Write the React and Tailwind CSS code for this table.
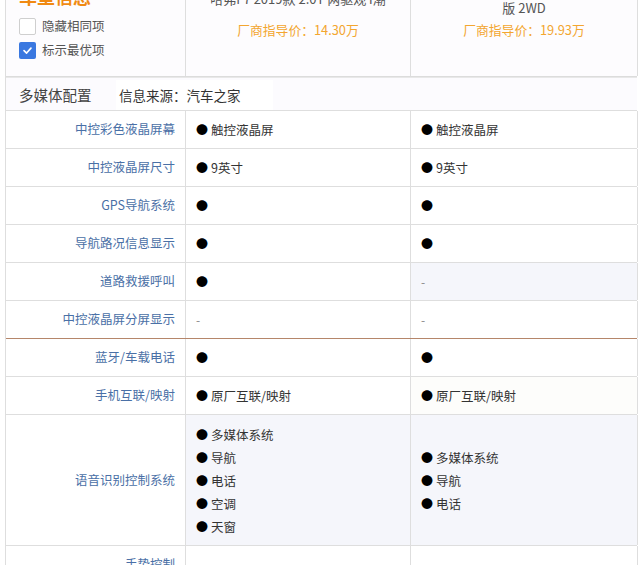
import React from "react";

const rows = [
  { label: "中控彩色液晶屏幕", a: ["触控液晶屏"], b: ["触控液晶屏"] },
  { label: "中控液晶屏尺寸", a: ["9英寸"], b: ["9英寸"] },
  { label: "GPS导航系统", a: [""], b: [""] },
  { label: "导航路况信息显示", a: [""], b: [""] },
  { label: "道路救援呼叫", a: [""], b: null, bBg: "bg-[#f5f6fb]" },
  { label: "中控液晶屏分屏显示", a: null, b: null, brown: true },
  { label: "蓝牙/车载电话", a: [""], b: [""] },
  { label: "手机互联/映射", a: ["原厂互联/映射"], b: ["原厂互联/映射"], bBg: "bg-[#fdfdfb]" },
  {
    label: "语音识别控制系统",
    a: ["多媒体系统", "导航", "电话", "空调", "天窗"],
    b: ["多媒体系统", "导航", "电话"],
    aBg: "bg-[#f5f6fb]",
    bBg: "bg-[#f5f6fb]",
    tall: true,
  },
  { label: "手势控制", a: null, b: null },
];

const Cell = ({ items, bg = "bg-white" }) => (
  <div className={`${bg} border-r border-[#dedede] pl-[10px] flex flex-col justify-center overflow-hidden`}>
    {items === null ? (
      <span className="text-[#888] text-[12px] leading-[23px]">-</span>
    ) : (
      items.map((t, i) => (
        <div key={i} className="flex items-center gap-[3px] text-[12.5px] leading-[23px] text-[#333]">
          <span className="text-black text-[12px]">●</span>
          {t && <span>{t}</span>}
        </div>
      ))
    )}
  </div>
);

const CheckBox = ({ checked, label }) => (
  <div className="flex items-center gap-[6px] h-[24px]">
    {checked ? (
      <span className="w-[17px] h-[17px] rounded-[2px] bg-[#3a78e0] flex items-center justify-center">
        <svg width="11" height="11" viewBox="0 0 12 12" fill="none">
          <path d="M2.2 6.2 L5 8.8 L9.8 3.4" stroke="white" strokeWidth="1.8" strokeLinecap="round" strokeLinejoin="round" />
        </svg>
      </span>
    ) : (
      <span className="w-[17px] h-[17px] rounded-[2px] border border-[#cfcfcf] bg-white" />
    )}
    <span className="text-[12.5px] text-[#555]">{label}</span>
  </div>
);

export default function App() {
  return (
    <div
      className="w-[640px] h-[565px] overflow-hidden bg-white"
      style={{ fontFamily: '"Noto Sans CJK SC", "Noto Sans", sans-serif' }}
    >
      <div className="ml-[5px] w-[632px] -mt-[24px] border-l border-[#dedede]">
        {/* header */}
        <div className="grid grid-cols-[180px_225px_227px] h-[101px] bg-[#fdfcfe] border-b border-[#dcdcdc]">
          <div className="border-r border-[#dedede] pl-[13px] pt-[8px]">
            <div className="text-[18px] leading-[24px] font-bold text-[#f08a12]">车型信息</div>
            <div className="mt-[6px]">
              <CheckBox label="隐藏相同项" />
              <CheckBox checked label="标示最优项" />
            </div>
          </div>
          <div className="border-r border-[#dedede] flex flex-col items-center pt-[13px]">
            <div className="text-[13px] leading-[20px] text-[#555] whitespace-nowrap">哈弗F7 2019款 2.0T 两驱观 i潮</div>
            <div className="mt-[11px] text-[12.8px] leading-[20px] text-[#f3a630]">厂商指导价：14.30万</div>
          </div>
          <div className="border-r border-[#dedede] flex flex-col items-center pt-[2px] text-center">
            <div className="text-[13px] leading-[20px] text-[#555] whitespace-nowrap">哈弗F7x 2019款 2.0T 两驱极智运动</div>
            <div className="text-[13px] leading-[20px] text-[#555] whitespace-nowrap">版 2WD</div>
            <div className="mt-[2px] text-[12.8px] leading-[20px] text-[#f3a630]">厂商指导价：19.93万</div>
          </div>
        </div>
        {/* section title */}
        <div className="h-[34px] border-t border-[#e8e8e8] border-b border-b-[#dedede] bg-[#fcfbfe] flex items-end">
          <div className="flex items-center h-[30px] pl-[13px]">
            <span className="text-[14.5px] text-[#444] w-[97px]">多媒体配置</span>
            <span className="bg-white h-[30px] flex items-center pl-[3px] pr-[32px] text-[13.5px] text-[#333]">
              信息来源：汽车之家
            </span>
          </div>
        </div>
        {/* rows */}
        {rows.map((r, i) => (
          <div
            key={i}
            className={`grid grid-cols-[180px_225px_227px] grid-rows-[100%] ${r.tall ? "h-[131px]" : "h-[38px]"} border-b ${r.brown ? "border-[#b5866a]" : "border-[#dedede]"}`}
          >
            <div className="border-r border-[#dedede] bg-white flex items-center justify-end pr-[10px] text-[12.5px] text-[#4a70a6] overflow-hidden">
              {r.label}
            </div>
            <Cell items={r.a} bg={r.aBg} />
            <Cell items={r.b} bg={r.bBg} />
          </div>
        ))}
      </div>
    </div>
  );
}
